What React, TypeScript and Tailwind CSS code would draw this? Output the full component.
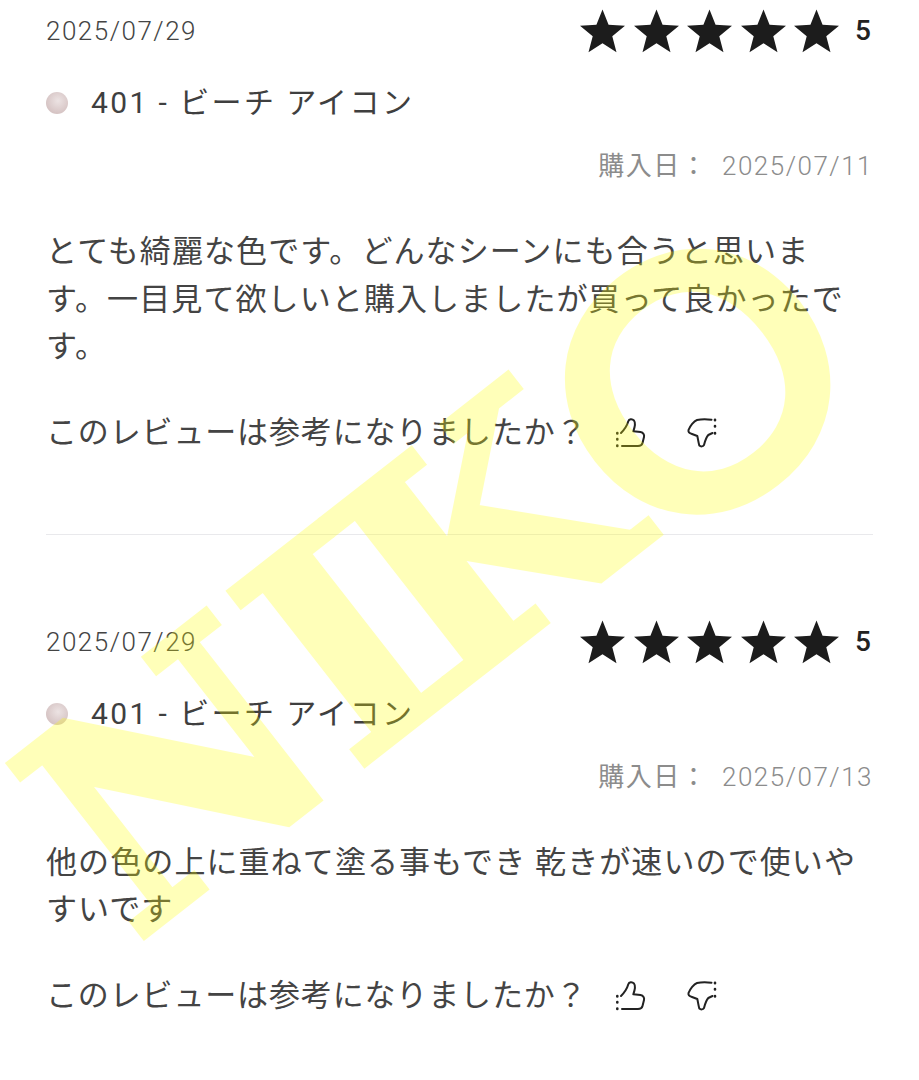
const FONT = "font-['Roboto','Noto_Sans_CJK_JP',sans-serif]";

const Star = () => (
  <svg viewBox="0 0 46 44" className="w-[45px] h-[44px]">
    <path d="M23 0 L29.2 15.6 L46 16.6 L33 27.3 L37.3 43.6 L23 34.6 L8.7 43.6 L13 27.3 L0 16.6 L16.8 15.6 Z" fill="#1c1c1c" />
  </svg>
);

const ThumbUp = () => (
  <svg viewBox="0 0 32 32" className="w-8 h-8" fill="none" stroke="#222" strokeWidth="2" strokeLinecap="round" strokeLinejoin="round">
    <path d="M7 16 C10 13 13 9 14.3 4.3 C15 2 18 1.5 20 3.5 C21.5 5.5 20.5 11 19.3 14.3 L26.5 15 C29.5 15.5 30.5 18 30 20 L28.5 26 C28 28 26.5 29 24 29 L8 29" />
    <path d="M3.3 16 v0.5 M3.3 22 v0.5 M3.3 28.5 v0.5" strokeWidth="2.6" />
  </svg>
);

const ThumbDown = () => (
  <svg viewBox="0 0 32 32" className="w-8 h-8" fill="none" stroke="#222" strokeWidth="2" strokeLinecap="round" strokeLinejoin="round">
    <path d="M25.5 2.7 C21 2 15 2 11 3 C8 4 4 9 2.5 13 C2 15.5 4 16.5 6 17 L11.3 19 C12 22 12.5 26 13.3 28.5 C15 30 17 29.5 18 28 C19 24 20.5 20 22.3 18 L26.5 16" />
    <path d="M29 2.7 v0.5 M29 9 v0.5 M29 16 v0.5" strokeWidth="2.6" />
  </svg>
);

const ReviewBlock = ({ bought, lines }: { bought: string; lines: string[] }) => (
  <div>
    <div className="flex items-center justify-between h-[44px]">
      <span className="text-[26px] font-light tracking-[1.5px] text-[#444] leading-none">2025/07/29</span>
      <div className="flex items-center">
        <div className="flex gap-[8.5px]">
          <Star />
          <Star />
          <Star />
          <Star />
          <Star />
        </div>
        <span className="ml-[16px] mr-[2px] text-[28px] font-medium text-[#222] leading-none">5</span>
      </div>
    </div>
    <div className="flex items-center mt-[28px] h-[44px]">
      <div className="w-[22px] h-[22px] rounded-full bg-[radial-gradient(circle_at_55%_40%,#ece3e3,#d6c4c4_70%)]" />
      <span className="ml-[23px] text-[30px] tracking-[2.4px] text-[#3f3f3f] leading-none">401 - ビーチ アイコン</span>
    </div>
    <div className="flex items-center justify-end mt-[19px] h-[44px] text-[#8c8c8c] leading-none">
      <span className="text-[26px] tracking-[1.4px]">購入日：</span>
      <span className="ml-[14px] text-[26px] font-light tracking-[1.5px]">{bought}</span>
    </div>
    <div className="mt-[40px] text-[31px] leading-[47.5px] tracking-[1.1px] text-[#444]">
      {lines.map((l) => (
        <div key={l}>{l}</div>
      ))}
    </div>
    <div className="flex items-center mt-[40px] h-[44px] text-[#444]">
      <span className="text-[31px] tracking-[0.85px] leading-none w-[568px]">このレビューは参考になりましたか？</span>
      <ThumbUp />
      <div className="ml-[40px]">
        <ThumbDown />
      </div>
    </div>
  </div>
);

// watermark sits on top of the page, semi transparent
const Watermark = () => (
  <div className="absolute left-[-2px] top-[770px] origin-top-left rotate-[-38deg] pointer-events-none text-[#ffff00] opacity-[0.27] leading-none whitespace-nowrap">
    <div className="flex items-start -mt-[34px] font-['DejaVu_Serif',serif] font-bold text-[300px] [-webkit-text-stroke:7px_#ffff00]">
      <span className="w-[279px]">N</span>
      <span className="w-[117px]">I</span>
      <span className="w-[251px]">K</span>
      <span className="-mt-[27px] font-['Lato',sans-serif] font-bold text-[355px] [-webkit-text-stroke:0]">O</span>
    </div>
  </div>
);

export default function App() {
  return (
    <div className={`relative w-[919px] h-[1080px] overflow-hidden bg-white ${FONT}`}>
      <div className="px-[46px] pt-[9px]">
        <ReviewBlock
          bought="2025/07/11"
          lines={["とても綺麗な色です。どんなシーンにも合うと思いま", "す。一目見て欲しいと購入しましたが買って良かったで", "す。"]}
        />
        <div className="mt-[79px] border-t border-[#e9e9ec]" />
        <div className="mt-[85px]">
          <ReviewBlock
            bought="2025/07/13"
            lines={["他の色の上に重ねて塗る事もでき 乾きが速いので使いや", "すいです"]}
          />
        </div>
      </div>
      <Watermark />
    </div>
  );
}
